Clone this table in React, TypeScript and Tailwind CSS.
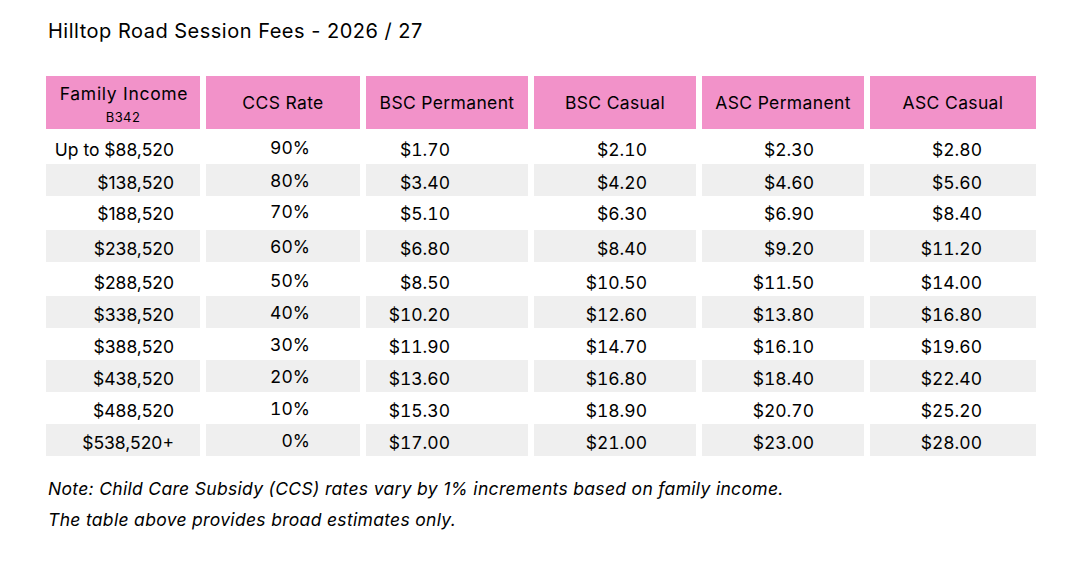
const rows = [
  { income: "Up to $88,520", rate: "90%", fees: ["$1.70", "$2.10", "$2.30", "$2.80"], h: "h-[31px]" },
  { income: "$138,520", rate: "80%", fees: ["$3.40", "$4.20", "$4.60", "$5.60"], h: "h-[29px]" },
  { income: "$188,520", rate: "70%", fees: ["$5.10", "$6.30", "$6.90", "$8.40"], h: "h-[33px]" },
  { income: "$238,520", rate: "60%", fees: ["$6.80", "$8.40", "$9.20", "$11.20"], h: "h-[32px]" },
  { income: "$288,520", rate: "50%", fees: ["$8.50", "$10.50", "$11.50", "$14.00"], h: "h-[30px]" },
  { income: "$338,520", rate: "40%", fees: ["$10.20", "$12.60", "$13.80", "$16.80"], h: "h-[30px]" },
  { income: "$388,520", rate: "30%", fees: ["$11.90", "$14.70", "$16.10", "$19.60"], h: "h-[30px]" },
  { income: "$438,520", rate: "20%", fees: ["$13.60", "$16.80", "$18.40", "$22.40"], h: "h-[30px]" },
  { income: "$488,520", rate: "10%", fees: ["$15.30", "$18.90", "$20.70", "$25.20"], h: "h-[30px]" },
  { income: "$538,520+", rate: "0%", fees: ["$17.00", "$21.00", "$23.00", "$28.00"], h: "h-[32px]" },
];

// right padding per fee column, so figures line up like the source sheet
const feePad = ["pr-[78px]", "pr-[49px]", "pr-[50px]", "pr-[54px]"];

const cols = "grid grid-cols-[154px_154px_162px_162px_162px_166px] gap-x-[6px]";

export default function App() {
  return (
    <div className="w-[1092px] h-[564px] bg-white text-black font-['Inter','Liberation_Sans',sans-serif] pl-[46px] pt-[17px]">
      <h1 className="text-[20px] leading-[28px] tracking-[0.025em] pl-[2px]">
        Hilltop Road Session Fees - 2026 / 27
      </h1>

      <div className="mt-[31px] w-[990px]">
        <div className={`${cols} h-[53px] text-[17.5px] tracking-[0.02em]`}>
          <div className="bg-[#f292c9] flex flex-col items-center pt-[6px]">
            <span className="leading-[24px] pl-[2px] tracking-[0.04em]">Family Income</span>
            <span className="text-[13px] leading-[18px] tracking-[0.03em] mt-[2px]">B342</span>
          </div>
          {["CCS Rate", "BSC Permanent", "BSC Casual", "ASC Permanent", "ASC Casual"].map((t) => (
            <div key={t} className="bg-[#f292c9] flex items-center justify-center pt-[2px]">
              {t}
            </div>
          ))}
        </div>

        <div className="flex flex-col gap-y-[2px] mt-[2px] text-[17.5px]">
          {rows.map((r, i) => {
            const bg = i % 2 === 1 ? "bg-[#efefef]" : "";
            return (
              <div key={r.income} className={`${cols} ${r.h}`}>
                <div className={`${bg} flex items-center justify-end pr-[26px] pt-[6px]`}>{r.income}</div>
                <div className={`${bg} flex items-center justify-end pr-[50px] pt-[2px] tabular-nums`}>{r.rate}</div>
                {r.fees.map((f, j) => (
                  <div key={j} className={`${bg} flex items-center justify-end pt-[6px] tabular-nums ${feePad[j]}`}>
                    {f}
                  </div>
                ))}
              </div>
            );
          })}
        </div>
      </div>

      <div className="mt-[17px] pl-[2px] italic text-[17.5px] leading-[31px] tracking-[0.018em]">
        <p>Note: Child Care Subsidy (CCS) rates vary by 1% increments based on family income.</p>
        <p>The table above provides broad estimates only.</p>
      </div>
    </div>
  );
}
